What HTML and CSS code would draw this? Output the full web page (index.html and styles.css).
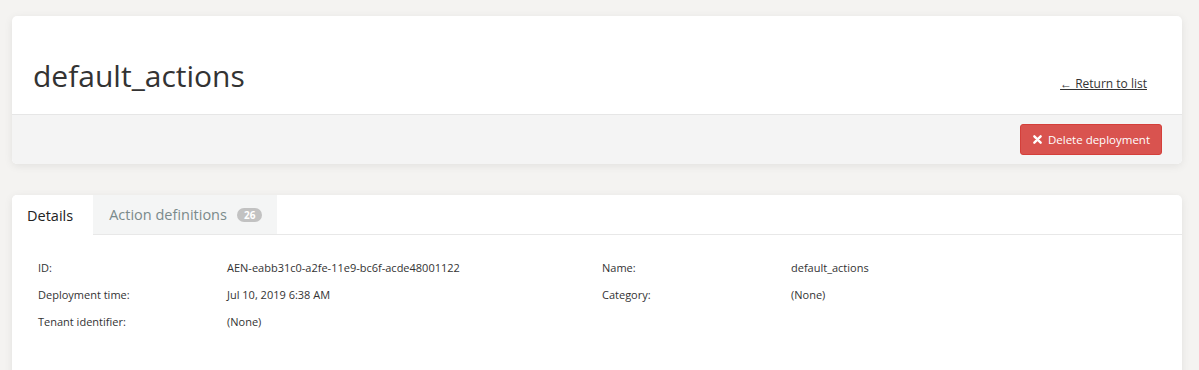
FILE: index.html
```html
<!DOCTYPE html>
<html lang="en">
<head>
    <meta charset="UTF-8">
    <title>default_actions</title>
    <link rel="stylesheet" href="styles.css">
</head>
<body>
    <div class="page">
        <div class="card header-card">
            <div class="header-top">
                <h1 class="title">default_actions</h1>
                <a class="back-link" href="#">&larr; Return to list</a>
            </div>
            <div class="header-bar">
                <button class="btn-delete">
                    <svg class="x" width="9" height="9" viewBox="0 0 10 10"><path d="M1.5 1.5L8.5 8.5M8.5 1.5L1.5 8.5" stroke="#fff" stroke-width="2.6" stroke-linecap="round"/></svg>
                    Delete deployment
                </button>
            </div>
        </div>

        <div class="card tabs-card">
            <div class="tabs">
                <div class="tab active">Details</div>
                <div class="tab">Action definitions <span class="badge">26</span></div>
            </div>
            <div class="details">
                <div class="col">
                    <div class="row"><span class="label">ID:</span><span class="value">AEN-eabb31c0-a2fe-11e9-bc6f-acde48001122</span></div>
                    <div class="row"><span class="label">Deployment time:</span><span class="value">Jul 10, 2019 6:38 AM</span></div>
                    <div class="row"><span class="label">Tenant identifier:</span><span class="value">(None)</span></div>
                </div>
                <div class="col">
                    <div class="row"><span class="label">Name:</span><span class="value">default_actions</span></div>
                    <div class="row"><span class="label">Category:</span><span class="value">(None)</span></div>
                </div>
            </div>
        </div>
    </div>
</body>
</html>
```

FILE: styles.css
```css
body {
    margin: 0;
    background-color: #f4f3f1;
    font-family: "Open Sans", "Noto Sans", sans-serif;
    color: #333;
}
.page {
    padding: 16px 17px 0 12px;
}
.card {
    background-color: #fff;
    border-radius: 5px;
    box-shadow: 0 2px 8px rgba(0, 0, 0, 0.08);
}
.header-card {
    overflow: hidden;
    margin-bottom: 31px;
}
.header-top {
    display: flex;
    justify-content: space-between;
    align-items: flex-end;
    height: 98px;
    padding: 0 35px 0 21px;
    border-bottom: 1px solid #e6e6e6;
}
.title {
    margin: 0 0 18px;
    font-size: 30px;
    font-weight: 400;
    color: #333;
}
.back-link {
    margin-bottom: 22px;
    font-size: 12px;
    color: #333;
    text-decoration: underline;
}
.header-bar {
    display: flex;
    justify-content: flex-end;
    align-items: center;
    height: 49px;
    padding-right: 20px;
    background-color: #f4f4f4;
}
.btn-delete {
    display: flex;
    align-items: center;
    height: 31px;
    padding: 0 11px 0 12px;
    background-color: #d9534f;
    border: 1px solid #d43f3a;
    border-radius: 3px;
    color: #fff;
    font-family: inherit;
    font-size: 11.5px;
    cursor: pointer;
}
.btn-delete .x {
    margin-right: 6px;
}
.tabs-card {
    min-height: 200px;
    border-radius: 5px 5px 0 0;
}
.tabs {
    display: flex;
    height: 39px;
    border-bottom: 1px solid #e8e8e8;
}
.tab {
    display: flex;
    align-items: center;
    padding: 0 15px 0 16px;
    font-size: 14.5px;
    color: #7b8a8b;
    background-color: #f4f5f5;
}
.tab.active {
    padding: 0 20px 0 15px;
    color: #222;
    background-color: #fff;
    border-radius: 5px 0 0 0;
    margin-bottom: -1px;
}
.badge {
    display: inline-block;
    margin-left: 10px;
    padding: 0 7px;
    height: 14px;
    line-height: 14px;
    border-radius: 7px;
    background-color: #c2c2c2;
    color: #fff;
    font-size: 10px;
    font-weight: 700;
}
.details {
    display: grid;
    grid-template-columns: 564px 1fr;
    padding: 19px 0 30px 26px;
}
.row {
    display: grid;
    grid-template-columns: 189px 1fr;
    height: 27px;
    align-items: center;
    font-size: 11px;
    color: #333;
}
```
